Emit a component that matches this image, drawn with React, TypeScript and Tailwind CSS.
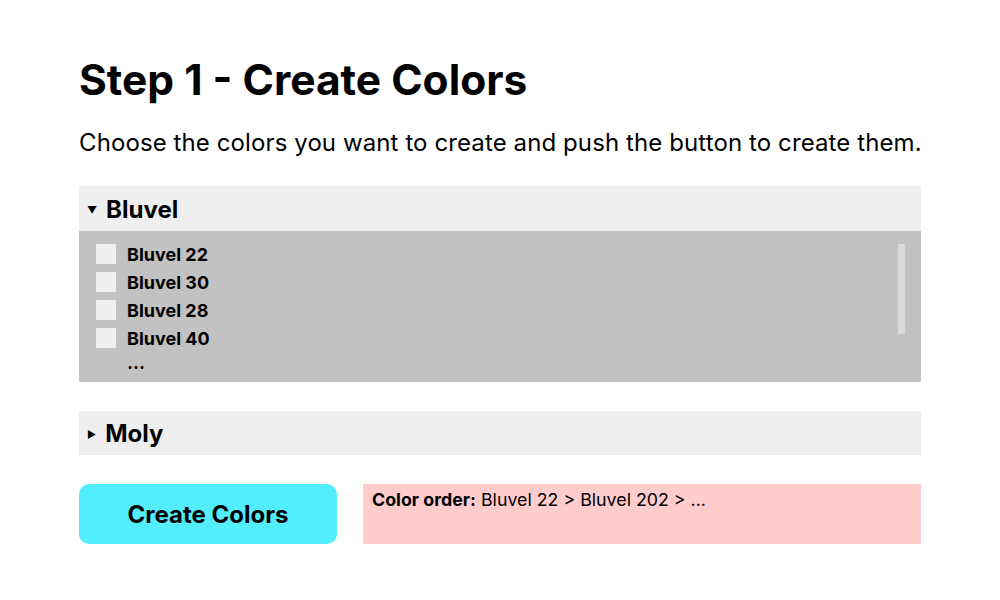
export default function App() {
  const items = ['Bluvel 22', 'Bluvel 30', 'Bluvel 28', 'Bluvel 40'];

  return (
    <div className="min-h-screen w-[1000px] h-[600px] bg-white font-['Inter',sans-serif] text-black">
      <main className="mx-auto w-[842px] pt-[54px]">
        <h1 className="text-[42.5px] font-bold leading-[52px]">Step 1 - Create Colors</h1>
        <p className="mt-[21px] text-[24px] leading-[32px] tracking-[0.1px] whitespace-nowrap">
          Choose the colors you want to create and push the button to create them.
        </p>

        <section className="mt-[27px]">
          <div className="flex h-[45px] items-center bg-[#efefef] pl-[8px] pt-[3px]">
            <span className="mr-[9px] text-[10px] leading-none">▼</span>
            <span className="text-[24px] font-bold">Bluvel</span>
          </div>
          <div className="flex h-[151px] justify-between bg-[#c2c2c2] pl-[17px] pr-[16px] pt-[13px]">
            <ul className="flex flex-col gap-[8px]">
              {items.map((name) => (
                <li key={name} className="flex h-[20px] items-center gap-[11px]">
                  <span className="h-[20px] w-[20px] bg-[#efefef]" />
                  <span className="text-[18px] font-bold">{name}</span>
                </li>
              ))}
              <li className="-mt-[3px] pl-[31px] text-[18px] font-bold leading-[20px]">...</li>
            </ul>
            <div className="h-[90px] w-[7px] bg-[#dadada]" />
          </div>
        </section>

        <section className="mt-[29px]">
          <div className="flex h-[44px] items-center bg-[#efefef] pl-[8px] pt-[1px]">
            <span className="mr-[9px] text-[10px] leading-none">▶</span>
            <span className="text-[24px] font-bold">Moly</span>
          </div>
        </section>

        <div className="mt-[29px] flex gap-[26px]">
          <button className="h-[60px] w-[258px] rounded-[10px] bg-[#52eefe] pt-[2px] text-[24px] font-bold">
            Create Colors
          </button>
          <div className="h-[60px] flex-1 bg-[#ffcccc] px-[9px] pt-[4px] text-[17.8px] leading-[24px]">
            <span className="font-bold">Color order:</span> Bluvel 22 &gt; Bluvel 202 &gt; ...
          </div>
        </div>
      </main>
    </div>
  );
}
